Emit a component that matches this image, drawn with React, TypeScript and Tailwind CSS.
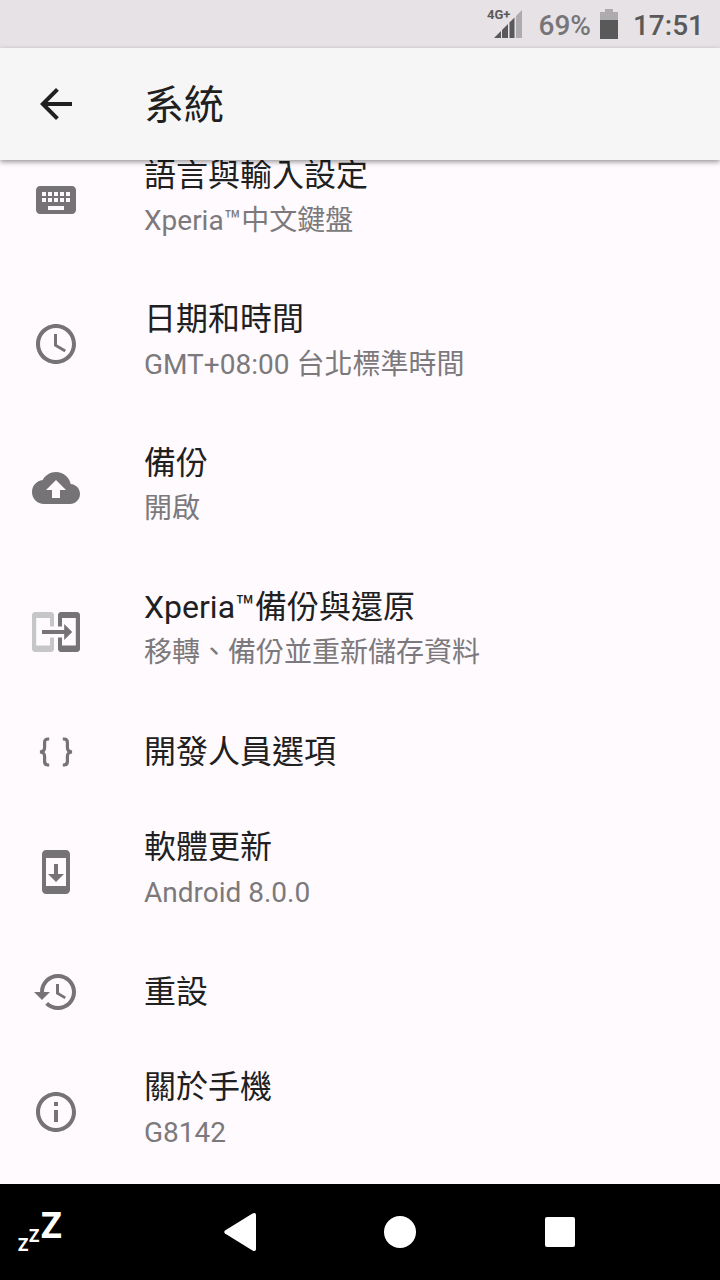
import type { ReactNode } from 'react';

type IconProps = {
  children: ReactNode;
};

// Icons are drawn on a 24 unit grid and shown at double size.
const Icon = ({ children }: IconProps) => (
  <svg
    className="w-12 h-12 shrink-0"
    viewBox="0 0 24 24"
    fill="currentColor"
    aria-hidden="true"
  >
    {children}
  </svg>
);

const KeyboardIcon = () => (
  <Icon>
    <path d="M20 5H4c-1.1 0-1.99.9-1.99 2L2 17c0 1.1.9 2 2 2h16c1.1 0 2-.9 2-2V7c0-1.1-.9-2-2-2zm-9 3h2v2h-2V8zm0 3h2v2h-2v-2zM8 8h2v2H8V8zm0 3h2v2H8v-2zm-1 2H5v-2h2v2zm0-3H5V8h2v2zm9 7H8v-2h8v2zm0-4h-2v-2h2v2zm0-3h-2V8h2v2zm3 3h-2v-2h2v2zm0-3h-2V8h2v2z" />
  </Icon>
);

const ClockIcon = () => (
  <Icon>
    <path d="M11.99 2C6.47 2 2 6.48 2 12s4.47 10 9.99 10C17.52 22 22 17.52 22 12S17.52 2 11.99 2zM12 20c-4.42 0-8-3.58-8-8s3.58-8 8-8 8 3.58 8 8-3.58 8-8 8zM12.5 7H11v6l5.25 3.15.75-1.23-4.5-2.67z" />
  </Icon>
);

const BackupIcon = () => (
  <Icon>
    <path d="M19.35 10.04C18.67 6.59 15.64 4 12 4 9.11 4 6.6 5.64 5.35 8.04 2.34 8.36 0 10.91 0 14c0 3.31 2.69 6 6 6h13c2.76 0 5-2.24 5-5 0-2.64-2.05-4.78-4.65-4.96zM14 13v4h-4v-4H7l5-5 5 5h-3z" />
  </Icon>
);

const TransferIcon = () => (
  <Icon>
    <path
      fill="#c6c5c7"
      d="M11 9.2V3.5C11 2.7 10.3 2 9.5 2h-8C.7 2 0 2.7 0 3.5v17c0 .8.7 1.5 1.5 1.5h8c.8 0 1.5-.7 1.5-1.5v-5.7H9v4H2.1V5H9v4.2z"
    />
    <path d="M13 9.2V3.5c0-.8.7-1.5 1.5-1.5h8c.8 0 1.5.7 1.5 1.5v17c0 .8-.7 1.5-1.5 1.5h-8c-.8 0-1.5-.7-1.5-1.5v-5.7h2v4h6.9V5H15v4.2z" />
    <path d="M5 11h11.1V8l4 4-4 4v-3H5z" />
  </Icon>
);

const BracesIcon = () => (
  <Icon>
    <g fill="none" stroke="currentColor" strokeWidth="1.6">
      <path d="M8.6 5.5H8C6.9 5.5 6.3 6.2 6.3 7.2v2.7c0 1.2-.6 2-2.3 2.1 1.7.1 2.3.9 2.3 2.1v2.7c0 1 .6 1.7 1.7 1.7h.6" />
      <path d="M15.4 5.5h.6c1.1 0 1.7.7 1.7 1.7v2.7c0 1.2.6 2 2.3 2.1-1.7.1-2.3.9-2.3 2.1v2.7c0 1-.6 1.7-1.7 1.7h-.6" />
    </g>
  </Icon>
);

const UpdateIcon = () => (
  <Icon>
    <path d="M17 1.01L7 1c-1.1 0-2 .9-2 2v18c0 1.1.9 2 2 2h10c1.1 0 2-.9 2-2V3c0-1.1-.9-1.99-2-1.99zM17 19H7V5h10v14zm-1-6h-3V8h-2v5H8l4 4 4-4z" />
  </Icon>
);

const HistoryIcon = () => (
  <Icon>
    <path d="M13 3c-4.97 0-9 4.03-9 9H1l3.89 3.89.07.14L9 12H6c0-3.87 3.13-7 7-7s7 3.13 7 7-3.13 7-7 7c-1.93 0-3.68-.79-4.94-2.06l-1.42 1.42C8.27 19.99 10.51 21 13 21c4.97 0 9-4.03 9-9s-4.03-9-9-9zm-1 5v5l4.28 2.54.72-1.21-3.5-2.08V8H12z" />
  </Icon>
);

const InfoIcon = () => (
  <Icon>
    <path d="M11 17h2v-6h-2v6zm1-15C6.48 2 2 6.48 2 12s4.48 10 10 10 10-4.48 10-10S17.52 2 12 2zm0 18c-4.41 0-8-3.59-8-8s3.59-8 8-8 8 3.59 8 8-3.59 8-8 8zM11 9h2V7h-2v2z" />
  </Icon>
);

const settings = [
  { title: '語言與輸入設定', summary: 'Xperia™中文鍵盤', icon: <KeyboardIcon /> },
  { title: '日期和時間', summary: 'GMT+08:00 台北標準時間', icon: <ClockIcon /> },
  { title: '備份', summary: '開啟', icon: <BackupIcon /> },
  {
    title: 'Xperia™備份與還原',
    summary: '移轉、備份並重新儲存資料',
    icon: <TransferIcon />,
  },
  { title: '開發人員選項', icon: <BracesIcon /> },
  { title: '軟體更新', summary: 'Android 8.0.0', icon: <UpdateIcon /> },
  { title: '重設', icon: <HistoryIcon /> },
  { title: '關於手機', summary: 'G8142', icon: <InfoIcon /> },
];

const StatusBar = () => (
  <div className="h-12 bg-[#e7e2e6] flex justify-end items-center pr-4 text-[28px] leading-8 font-medium">
    <svg className="w-9 h-8 mr-4" viewBox="0 0 36 32" aria-label="4G+">
      <text x="0" y="11" fontSize="13" fontWeight="700" fill="#5a595a">
        4G+
      </text>
      <g fill="#5a595a">
        <path d="M7 30l7-7v7z" />
        <path d="M15 22l6-6v14h-6z" />
        <path d="M22.5 14.5l5-5V30h-5z" />
      </g>
      <path d="M29 8l6-6v28h-6z" fill="#adabad" />
    </svg>
    <span className="text-[#777577] pt-1">69%</span>
    <svg className="w-5 h-8 mx-2" viewBox="0 0 20 32" aria-hidden="true">
      <path d="M6 1h8v3h5v9H1V4h5z" fill="#adabad" />
      <path d="M1 12h18v19H1z" fill="#5a595a" />
    </svg>
    <span className="text-[#5a595a] pt-1 ml-1.5">17:51</span>
  </div>
);

const Header = () => (
  <header className="relative z-10 h-28 px-8 bg-[#f6f6f6] flex items-center gap-16 shadow-[0_2px_5px_rgba(0,0,0,0.4)]">
    <button type="button" aria-label="返回">
      <Icon>
        <path d="M20 11H7.83l5.59-5.59L12 4l-8 8 8 8 1.41-1.41L7.83 13H20v-2z" />
      </Icon>
    </button>
    <h1 className="text-[40px] leading-12 pt-1">系統</h1>
  </header>
);

const SettingsList = () => (
  <main className="flex-1 overflow-hidden">
    {/* scrolled a little, so the first row runs under the header */}
    <ul className="-mt-8">
      {settings.map((item) => (
        <li key={item.title}>
          <a
            href="#"
            className={`px-8 flex items-center gap-16 ${
              item.summary ? 'h-36' : 'h-24'
            }`}
          >
            <span className="text-[#757376]">{item.icon}</span>
            <span className="flex flex-col gap-0.5">
              <span className="text-[32px] leading-10">{item.title}</span>
              {item.summary && (
                <span className="text-[28px] leading-12 text-[#7b797b]">
                  {item.summary}
                </span>
              )}
            </span>
          </a>
        </li>
      ))}
    </ul>
  </main>
);

const NavigationBar = () => (
  <nav className="h-24 bg-black text-white grid grid-cols-9 items-center">
    <button type="button" className="col-span-2 pl-4" aria-label="Zzz">
      <svg
        className="w-14 h-18"
        viewBox="0 -12 56 72"
        fill="currentColor"
        fontFamily="Noto Sans"
        fontWeight="700"
      >
        <text x="2" y="43" fontSize="18">
          Z
        </text>
        <text x="13" y="34" fontSize="18">
          Z
        </text>
        <text x="25" y="30" fontSize="36">
          Z
        </text>
      </svg>
    </button>
    <button
      type="button"
      className="col-span-2 flex justify-center"
      aria-label="返回"
    >
      <svg className="w-8 h-10" viewBox="0 0 32 40" fill="currentColor">
        <path d="M1 18.5L28.5 1.5Q32 0 32 3v34q0 3-3.5 1.500L1 21.5q-1.5-1.5 0-3z" />
      </svg>
    </button>
    <button
      type="button"
      className="col-span-2 flex justify-center"
      aria-label="主畫面"
    >
      <span className="w-8 h-8 rounded-full bg-white" />
    </button>
    <button
      type="button"
      className="col-span-2 flex justify-center"
      aria-label="最近使用"
    >
      <span className="w-[30px] h-[30px] rounded-xs bg-white" />
    </button>
  </nav>
);

const App = () => {
  return (
    <div className="min-h-screen flex flex-col bg-[#fefafe] text-[#212021] font-[Roboto,'Noto_Sans_CJK_TC',sans-serif]">
      <StatusBar />
      <Header />
      <SettingsList />
      <NavigationBar />
    </div>
  );
};

export default App;
